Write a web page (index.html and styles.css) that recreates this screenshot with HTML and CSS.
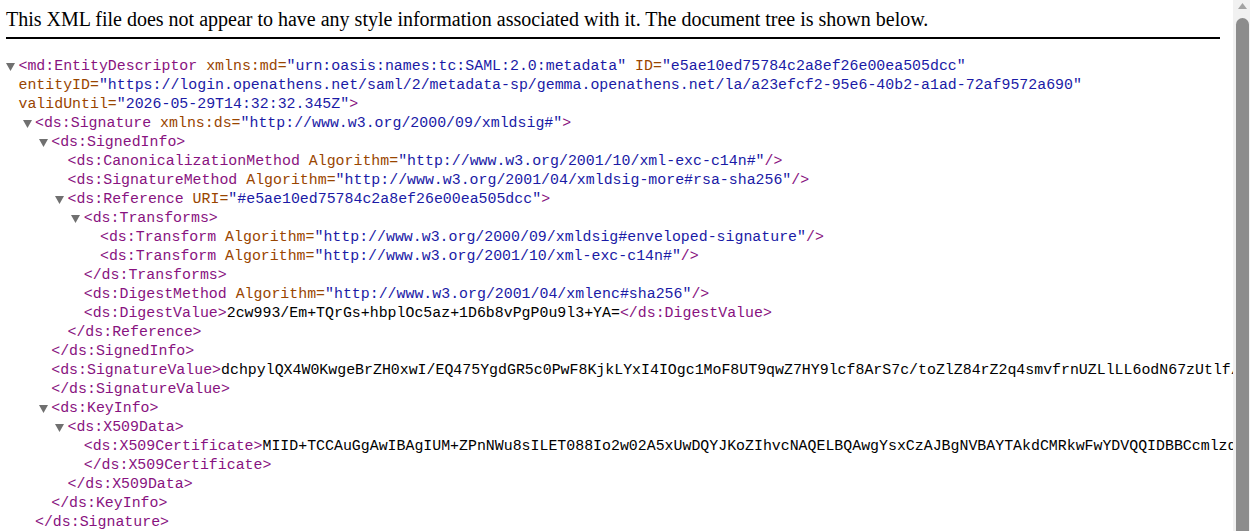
FILE: index.html
```html
<!DOCTYPE html>
<html lang="en">
<head>
<meta charset="utf-8">
<title>XML</title>
<link rel="stylesheet" href="styles.css">
</head>
<body>
<div class="header">This XML file does not appear to have any style information associated with it. The document tree is shown below.</div>
<div class="tree">
  <div class="row l0"><span class="tw"><svg class="tri" viewBox="0 0 9 8"><polygon points="0,0 9,0 4.5,8"/></svg></span><span class="t">&lt;md:EntityDescriptor</span> <span class="an">xmlns:md=</span><span class="av">"urn:oasis:names:tc:SAML:2.0:metadata"</span> <span class="an">ID=</span><span class="av">"e5ae10ed75784c2a8ef26e00ea505dcc"</span></div>
  <div class="row l0"><span class="an">entityID=</span><span class="av">"https://login.openathens.net/saml/2/metadata-sp/gemma.openathens.net/la/a23efcf2-95e6-40b2-a1ad-72af9572a690"</span></div>
  <div class="row l0"><span class="an">validUntil=</span><span class="av">"2026-05-29T14:32:32.345Z"</span><span class="t">&gt;</span></div>
  <div class="row l1"><span class="tw"><svg class="tri" viewBox="0 0 9 8"><polygon points="0,0 9,0 4.5,8"/></svg></span><span class="t">&lt;ds:Signature</span> <span class="an">xmlns:ds=</span><span class="av">"http://www.w3.org/2000/09/xmldsig#"</span><span class="t">&gt;</span></div>
  <div class="row l2"><span class="tw"><svg class="tri" viewBox="0 0 9 8"><polygon points="0,0 9,0 4.5,8"/></svg></span><span class="t">&lt;ds:SignedInfo&gt;</span></div>
  <div class="row l3"><span class="t">&lt;ds:CanonicalizationMethod</span> <span class="an">Algorithm=</span><span class="av">"http://www.w3.org/2001/10/xml-exc-c14n#"</span><span class="t">/&gt;</span></div>
  <div class="row l3"><span class="t">&lt;ds:SignatureMethod</span> <span class="an">Algorithm=</span><span class="av">"http://www.w3.org/2001/04/xmldsig-more#rsa-sha256"</span><span class="t">/&gt;</span></div>
  <div class="row l3"><span class="tw"><svg class="tri" viewBox="0 0 9 8"><polygon points="0,0 9,0 4.5,8"/></svg></span><span class="t">&lt;ds:Reference</span> <span class="an">URI=</span><span class="av">"#e5ae10ed75784c2a8ef26e00ea505dcc"</span><span class="t">&gt;</span></div>
  <div class="row l4"><span class="tw"><svg class="tri" viewBox="0 0 9 8"><polygon points="0,0 9,0 4.5,8"/></svg></span><span class="t">&lt;ds:Transforms&gt;</span></div>
  <div class="row l5"><span class="t">&lt;ds:Transform</span> <span class="an">Algorithm=</span><span class="av">"http://www.w3.org/2000/09/xmldsig#enveloped-signature"</span><span class="t">/&gt;</span></div>
  <div class="row l5"><span class="t">&lt;ds:Transform</span> <span class="an">Algorithm=</span><span class="av">"http://www.w3.org/2001/10/xml-exc-c14n#"</span><span class="t">/&gt;</span></div>
  <div class="row l4"><span class="t">&lt;/ds:Transforms&gt;</span></div>
  <div class="row l4"><span class="t">&lt;ds:DigestMethod</span> <span class="an">Algorithm=</span><span class="av">"http://www.w3.org/2001/04/xmlenc#sha256"</span><span class="t">/&gt;</span></div>
  <div class="row l4"><span class="t">&lt;ds:DigestValue&gt;</span>2cw993/Em+TQrGs+hbplOc5az+1D6b8vPgP0u9l3+YA=<span class="t">&lt;/ds:DigestValue&gt;</span></div>
  <div class="row l3"><span class="t">&lt;/ds:Reference&gt;</span></div>
  <div class="row l2"><span class="t">&lt;/ds:SignedInfo&gt;</span></div>
  <div class="row l2"><span class="t">&lt;ds:SignatureValue&gt;</span>dchpylQX4W0KwgeBrZH0xwI/EQ475YgdGR5c0PwF8KjkLYxI4IOgc1MoF8UT9qwZ7HY9lcf8ArS7c/toZlZ84rZ2q4smvfrnUZLlLL6odN67zUtlf/Q3kR8vWm2pXaHs0Lz</div>
  <div class="row l2"><span class="t">&lt;/ds:SignatureValue&gt;</span></div>
  <div class="row l2"><span class="tw"><svg class="tri" viewBox="0 0 9 8"><polygon points="0,0 9,0 4.5,8"/></svg></span><span class="t">&lt;ds:KeyInfo&gt;</span></div>
  <div class="row l3"><span class="tw"><svg class="tri" viewBox="0 0 9 8"><polygon points="0,0 9,0 4.5,8"/></svg></span><span class="t">&lt;ds:X509Data&gt;</span></div>
  <div class="row l4"><span class="t">&lt;ds:X509Certificate&gt;</span>MIID+TCCAuGgAwIBAgIUM+ZPnNWu8sILET088Io2w02A5xUwDQYJKoZIhvcNAQELBQAwgYsxCzAJBgNVBAYTAkdCMRkwFwYDVQQIDBBCcmlzdG9sIGFuZCBTb21lcnNldA</div>
  <div class="row l4"><span class="t">&lt;/ds:X509Certificate&gt;</span></div>
  <div class="row l3"><span class="t">&lt;/ds:X509Data&gt;</span></div>
  <div class="row l2"><span class="t">&lt;/ds:KeyInfo&gt;</span></div>
  <div class="row l1"><span class="t">&lt;/ds:Signature&gt;</span></div>
</div>
<div class="scrollbar">
  <svg class="sb-arrow" viewBox="0 0 9 6"><polygon points="0,6 9,6 4.5,0"/></svg>
  <div class="sb-thumb"></div>
</div>
</body>
</html>
```
FILE: styles.css
```css
html, body {
  margin: 0;
  padding: 0;
  overflow: hidden;
  background: #ffffff;
  height: 100%;
}

body {
  font-family: "Liberation Serif", "Times New Roman", serif;
  color: #000000;
}

.header {
  margin: 0 30px 0 6px;
  padding: 8px 0 6px 0;
  font-size: 20px;
  line-height: 23px;
  border-bottom: 2px solid #000000;
  white-space: nowrap;
}

.tree {
  margin-top: 18px;
  font-family: "Liberation Mono", "DejaVu Sans Mono", monospace;
  font-size: 14.9px;
  line-height: 19px;
}

.row {
  height: 19px;
  white-space: pre;
}

.l0 { padding-left: 18.5px; }
.l1 { padding-left: 35px; }
.l2 { padding-left: 51.25px; }
.l3 { padding-left: 67.5px; }
.l4 { padding-left: 83.75px; }
.l5 { padding-left: 100px; }

.tw {
  display: inline-block;
  width: 12.5px;
  margin-left: -12.5px;
  vertical-align: top;
  height: 19px;
}

.tri {
  display: block;
  width: 9px;
  height: 8px;
  margin-top: 6px;
  fill: #707070;
}

.t { color: #881280; }
.an { color: #994500; }
.av { color: #1a1aa6; }

.scrollbar {
  position: fixed;
  top: 0;
  right: 0;
  width: 17px;
  height: 100%;
  background: #f1f1f1;
}

.sb-arrow {
  position: absolute;
  top: 3px;
  left: 5px;
  width: 9px;
  height: 6px;
  fill: #a3a3a3;
}

.sb-thumb {
  position: absolute;
  top: 18px;
  left: 3px;
  width: 13px;
  bottom: -10px;
  background: #8c8c8c;
  border-radius: 7px;
}
```
